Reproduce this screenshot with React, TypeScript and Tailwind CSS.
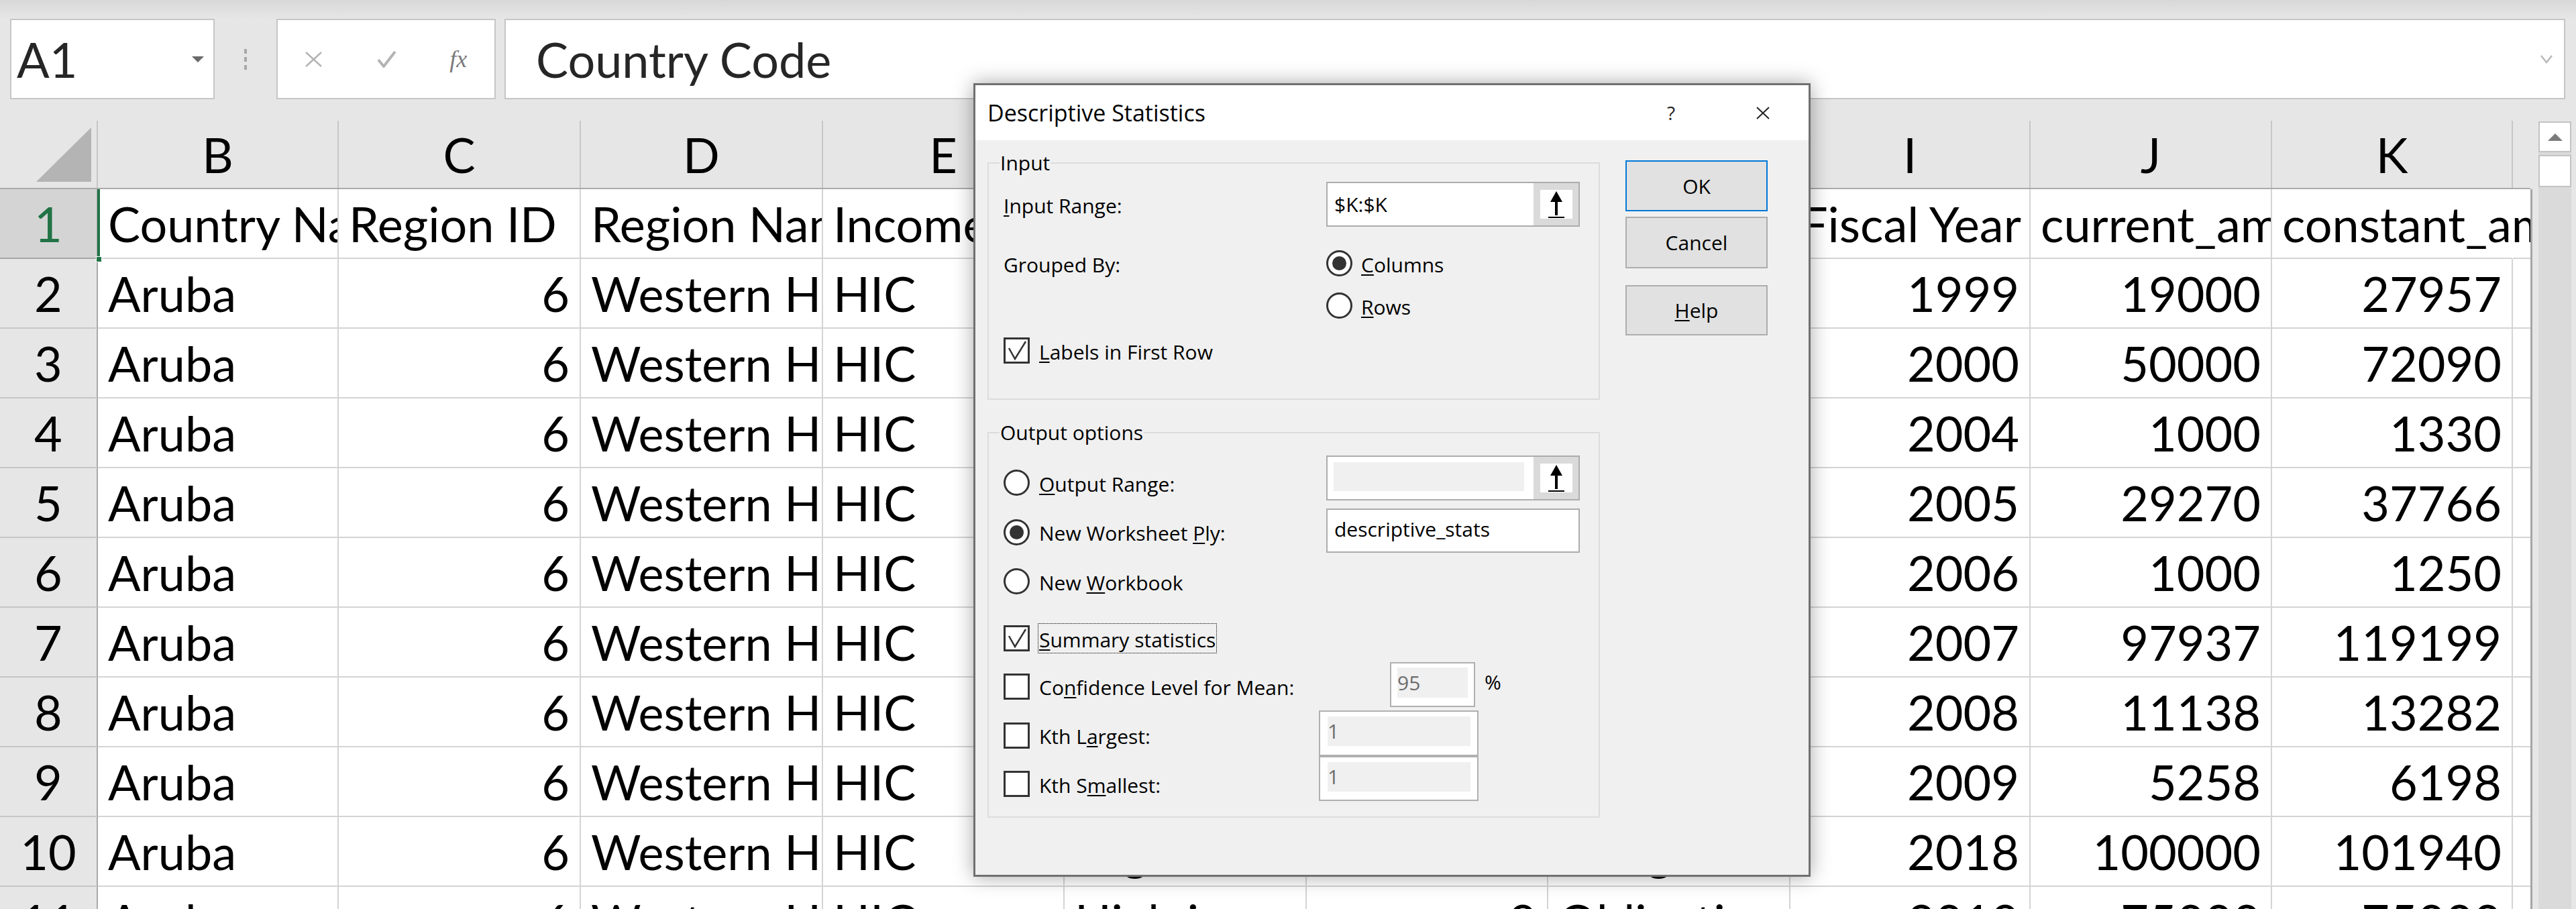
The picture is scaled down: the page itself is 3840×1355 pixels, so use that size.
import React from "react";

const colW = [359, 361, 361, 360, 361, 360, 361, 358, 360, 359, 360];
const letters = ["B", "C", "D", "E", "F", "G", "H", "I", "J", "K", "L"];
const numeric = [false, true, false, false, false, true, false, true, true, true, false];

const headerRow = [
  "Country Name",
  "Region ID",
  "Region Name",
  "Income Group Code",
  "Income Group",
  "Lending Category",
  "Transaction Type",
  "Fiscal Year",
  "current_amount",
  "constant_amount",
  "",
];

const amounts: [number, number, number][] = [
  [1999, 19000, 27957],
  [2000, 50000, 72090],
  [2004, 1000, 1330],
  [2005, 29270, 37766],
  [2006, 1000, 1250],
  [2007, 97937, 119199],
  [2008, 11138, 13282],
  [2009, 5258, 6198],
  [2018, 100000, 101940],
  [2019, 75000, 75000],
];

const bodyRows = amounts.map(([y, c, k]) => [
  "Aruba",
  "6",
  "Western Hemisphere",
  "HIC",
  "High income",
  "9",
  "Obligations",
  String(y),
  String(c),
  String(k),
  "",
]);

const M = ({ children }: { children: React.ReactNode }) => (
  <u className="underline decoration-2 underline-offset-[3px]">{children}</u>
);

const Radio = ({ on }: { on?: boolean }) => (
  <span className="flex h-[39px] w-[39px] shrink-0 items-center justify-center rounded-full border-[3px] border-[#333333] bg-white">
    {on && <span className="h-[21px] w-[21px] rounded-full bg-[#333333]" />}
  </span>
);

const Check = ({ on }: { on?: boolean }) => (
  <span className="block h-[39px] w-[39px] shrink-0 border-[3px] border-[#333333] bg-white">
    {on && (
      <svg viewBox="0 0 33 33" className="h-full w-full">
        <path d="M5 13 L14 29 L30 3" fill="none" stroke="#333333" strokeWidth="2.5" />
      </svg>
    )}
  </span>
);

const RefArrow = () => (
  <svg width="48" height="43" viewBox="0 0 48 43">
    <rect width="48" height="43" fill="#ffffff" />
    <path d="M24 2 L15 18 L33 18 Z" fill="#000000" />
    <rect x="22" y="14" width="4" height="24" fill="#000000" />
    <rect x="12" y="40" width="24" height="2" fill="#000000" />
  </svg>
);

const RefField = ({ value }: { value?: string }) => (
  <div className="flex h-[67px] w-[378px] shrink-0 border-2 border-[#acacac] bg-white">
    <div className="flex-1">
      {value ? (
        <span className="block pl-[10px] text-[30px] leading-[63px]">{value}</span>
      ) : (
        <div className="ml-[9px] mt-[8px] h-[43px] w-[284px] bg-[#f0f0f0]" />
      )}
    </div>
    <div className="flex w-[67px] items-center justify-center bg-[#dadada]">
      <RefArrow />
    </div>
  </div>
);

const GreyField = ({ w, h, innerW, innerH, left, top, value }: { w: number; h: number; innerW: number; innerH: number; left: number; top: number; value: string }) => (
  <div className="shrink-0 border-2 border-[#b0b0b0] bg-white" style={{ width: w, height: h }}>
    <div
      className="bg-[#f0f0f0] text-[30px] text-[#6d6d6d]"
      style={{ width: innerW, height: innerH, marginLeft: left, marginTop: top, lineHeight: `${innerH}px` }}
    >
      {value}
    </div>
  </div>
);

function FormulaBar() {
  return (
    <div className="shrink-0">
      <div className="h-[28px] bg-gradient-to-b from-[#d8d8d8] to-[#e6e6e6]" />
      <div className="flex h-[120px]">
        <div className="ml-[15px] flex w-[305px] items-center border-2 border-[#c6c6c6] bg-white pl-[8px]">
          <span className="flex-1 text-[72px] leading-[116px] text-[#262626]">A1</span>
          <svg width="18" height="9" className="mr-[14px]">
            <path d="M0 0H18L9 9Z" fill="#6a6a6a" />
          </svg>
        </div>
        <div className="flex w-[92px] flex-col items-center justify-center gap-[5px]">
          <span className="h-[7px] w-[4px] bg-[#a8a8a8]" />
          <span className="h-[7px] w-[4px] bg-[#a8a8a8]" />
          <span className="h-[7px] w-[4px] bg-[#a8a8a8]" />
        </div>
        <div className="flex w-[327px] items-center border-2 border-[#c6c6c6] bg-white">
          <span className="flex w-[108px] justify-center">
            <svg width="27" height="25" viewBox="0 0 27 25">
              <path d="M2 2 L25 23 M25 2 L2 23" stroke="#b4b4b4" strokeWidth="2.5" />
            </svg>
          </span>
          <span className="flex w-[108px] justify-center">
            <svg width="30" height="26" viewBox="0 0 30 26">
              <path d="M3 14 L11 24 L28 2" fill="none" stroke="#b4b4b4" strokeWidth="4" />
            </svg>
          </span>
          <span className="flex w-[108px] justify-center font-['Liberation_Serif',serif] text-[36px] italic text-[#7a7a7a]">
            fx
          </span>
        </div>
        <div className="ml-[13px] flex w-[3072px] items-center border-2 border-[#c6c6c6] bg-white pl-[45px]">
          <span className="flex-1 text-[72px] leading-[116px] text-[#262626]">Country Code</span>
          <svg width="20" height="14" viewBox="0 0 20 14" className="mr-[16px]">
            <path d="M2 2 L10 12 L18 2" fill="none" stroke="#b8b8b8" strokeWidth="2.5" />
          </svg>
        </div>
      </div>
      <div className="h-[32px]" />
    </div>
  );
}

function Grid() {
  return (
    <div className="flex flex-1">
      <div className="w-[3775px] shrink-0">
        <div className="flex h-[102px] w-[3772px] overflow-hidden border-b-2 border-[#ababab] bg-[#e6e6e6]">
          <div className="w-[146px] shrink-0 border-r-2 border-[#c6c6c6]">
            <svg width="146" height="100">
              <path d="M136 10 L136 91 L54 91 Z" fill="#b4b4b4" />
            </svg>
          </div>
          {letters.map((l, i) => (
            <div
              key={l}
              className="shrink-0 border-r-2 border-[#c6c6c6] text-center text-[72px] leading-[100px] text-black"
              style={{ width: colW[i] }}
            >
              {l}
            </div>
          ))}
        </div>
        <div className="h-[1100px] overflow-hidden border-r-[3px] border-[#a6a6a6]">
          {[headerRow, ...bodyRows].map((row, r) => (
            <div key={r} className="relative flex h-[104px] w-[3772px]">
              <div
                className={`w-[146px] shrink-0 border-b-2 border-r-2 border-r-[#a9a9a9] text-center text-[72px] leading-[102px] ${
                  r === 0 ? "border-b-[#a6a6a6] bg-[#d4d4d4] text-[#217346]" : "border-b-[#c6c6c6] bg-[#e6e6e6] text-black"
                }`}
              >
                {r + 1}
              </div>
              {row.map((t, c) => {
                const spill = r === 0 && c === 9;
                return (
                  <div
                    key={c}
                    className={`shrink-0 whitespace-nowrap border-b-2 border-r-2 border-[#d4d4d4] bg-white px-[15px] text-[72px] leading-[102px] text-black ${
                      r > 0 && numeric[c] ? "text-right" : "text-left"
                    } ${spill ? "relative z-[1] overflow-visible border-r-white" : "overflow-hidden"}`}
                    style={{ width: colW[c] }}
                  >
                    {t}
                  </div>
                );
              })}
              {r === 0 && (
                <>
                  <span className="absolute left-[145px] top-[-2px] z-[2] h-[106px] w-[4px] bg-[#217346]" />
                  <span className="absolute left-[143px] top-[100px] z-[2] h-[9px] w-[9px] border border-white bg-[#217346]" />
                </>
              )}
            </div>
          ))}
        </div>
      </div>
      <div className="ml-[9px] mt-[1px] flex w-[49px] flex-col bg-[#dadada]">
        <div className="flex h-[46px] items-center justify-center border-2 border-[#c3c3c3] bg-white">
          <svg width="22" height="11">
            <path d="M0 11 L11 0 L22 11 Z" fill="#7b7b7b" />
          </svg>
        </div>
        <div className="mt-[4px] h-[48px] border-2 border-[#c3c3c3] bg-white" />
      </div>
    </div>
  );
}

function Dialog() {
  const label = "relative top-[2px] text-[30px] leading-[36px]";
  return (
    <div className="absolute left-[1451px] top-[124px] z-10 flex h-[1183px] w-[1248px] flex-col border-[3px] border-[#707070] bg-[#f0f0f0] font-['Open_Sans',sans-serif] text-black shadow-[0_0_28px_rgba(0,0,0,0.35)]">
      <div className="flex h-[82px] items-center bg-white pl-[18px]">
        <span className="text-[34px] leading-[82px]">Descriptive Statistics</span>
        <span className="flex-1" />
        <span className="w-[60px] text-center text-[28px] text-[#222222]">?</span>
        <span className="ml-[77px] flex w-[60px] justify-center">
          <svg width="20" height="19" viewBox="0 0 20 19">
            <path d="M1 1 L19 18 M19 1 L1 18" stroke="#222222" strokeWidth="2" />
          </svg>
        </span>
        <span className="w-[38px]" />
      </div>
      <div className="flex flex-1 pl-[18px]">
        <div className="w-[913px] pt-[19px]">
          <fieldset className="border-2 border-[#dcdcdc]">
            <legend className="ml-[16px] px-[1px] text-[30px] leading-[30px]">Input</legend>
            <div className="flex flex-col pb-[52px] pl-[22px]">
              <div className="mt-[13px] flex h-[67px] items-center">
                <span className={`w-[481px] ${label}`}>
                  <M>I</M>nput Range:
                </span>
                <RefField value="$K:$K" />
              </div>
              <div className="mt-[35px] flex h-[39px] items-center">
                <span className={`w-[481px] ${label}`}>Grouped By:</span>
                <Radio on />
                <span className={`ml-[13px] ${label}`}>
                  <M>C</M>olumns
                </span>
              </div>
              <div className="mt-[24px] flex h-[39px] items-center pl-[481px]">
                <Radio />
                <span className={`ml-[13px] ${label}`}>
                  <M>R</M>ows
                </span>
              </div>
              <div className="mt-[28px] flex h-[39px] items-center">
                <Check on />
                <span className={`ml-[14px] ${label}`}>
                  <M>L</M>abels in First Row
                </span>
              </div>
            </div>
          </fieldset>

          <fieldset className="mt-[34px] border-2 border-[#dcdcdc]">
            <legend className="ml-[16px] px-[1px] text-[30px] leading-[30px]">Output options</legend>
            <div className="flex flex-col pb-[23px] pl-[22px]">
              <div className="mt-[19px] flex h-[66px] items-start">
                <div className="mt-[21px] flex w-[481px] items-center">
                  <Radio />
                  <span className={`ml-[14px] ${label}`}>
                    <M>O</M>utput Range:
                  </span>
                </div>
                <RefField />
              </div>
              <div className="mt-[13px] flex h-[66px] items-center">
                <div className="mt-[4px] flex w-[481px] items-center">
                  <Radio on />
                  <span className={`ml-[14px] ${label}`}>
                    New Worksheet <M>P</M>ly:
                  </span>
                </div>
                <div className="h-[66px] w-[378px] border-2 border-[#acacac] bg-white pl-[10px] text-[30px] leading-[58px]">
                  descriptive_stats
                </div>
              </div>
              <div className="mt-[23px] flex h-[39px] items-center">
                <Radio />
                <span className={`ml-[14px] ${label}`}>
                  New <M>W</M>orkbook
                </span>
              </div>
              <div className="mt-[46px] flex h-[39px] items-center">
                <Check on />
                <span className="ml-[12px] border border-dotted border-black px-[1px] pt-[5px] text-[30px] leading-[38px]">
                  <M>S</M>ummary statistics
                </span>
              </div>
              <div className="mt-[16px] flex h-[67px] items-center">
                <div className="mt-[5px] flex w-[576px] items-center">
                  <Check />
                  <span className={`ml-[14px] ${label}`}>
                    Co<M>n</M>fidence Level for Mean:
                  </span>
                </div>
                <GreyField w={127} h={67} innerW={105} innerH={45} left={9} top={6} value="95" />
                <span className="ml-[14px] self-start pt-[10px] text-[30px] leading-[40px]">%</span>
              </div>
              <div className="mt-[5px] flex h-[68px] items-center">
                <div className="mt-[6px] flex w-[470px] items-center">
                  <Check />
                  <span className={`ml-[14px] ${label}`}>
                    Kth L<M>a</M>rgest:
                  </span>
                </div>
                <GreyField w={238} h={68} innerW={213} innerH={44} left={11} top={7} value="1" />
              </div>
              <div className="flex h-[67px] items-center">
                <div className="mt-[16px] flex w-[470px] items-center">
                  <Check />
                  <span className={`ml-[14px] ${label}`}>
                    Kth S<M>m</M>allest:
                  </span>
                </div>
                <GreyField w={238} h={67} innerW={213} innerH={44} left={11} top={7} value="1" />
              </div>
            </div>
          </fieldset>
        </div>
        <div className="ml-[38px] flex w-[212px] flex-col pt-[30px] text-[30px]">
          <button className="h-[76px] border-2 border-[#0078d7] bg-[#e1e1e1]">OK</button>
          <button className="mt-[8px] h-[77px] border-2 border-[#adadad] bg-[#e1e1e1]">Cancel</button>
          <button className="mt-[25px] h-[75px] border-2 border-[#adadad] bg-[#e1e1e1]">
            <M>H</M>elp
          </button>
        </div>
      </div>
    </div>
  );
}

export default function App() {
  return (
    <div className="relative flex h-[1355px] w-[3840px] flex-col overflow-hidden bg-[#e6e6e6] font-['Lato',sans-serif]">
      <FormulaBar />
      <Grid />
      <Dialog />
    </div>
  );
}
